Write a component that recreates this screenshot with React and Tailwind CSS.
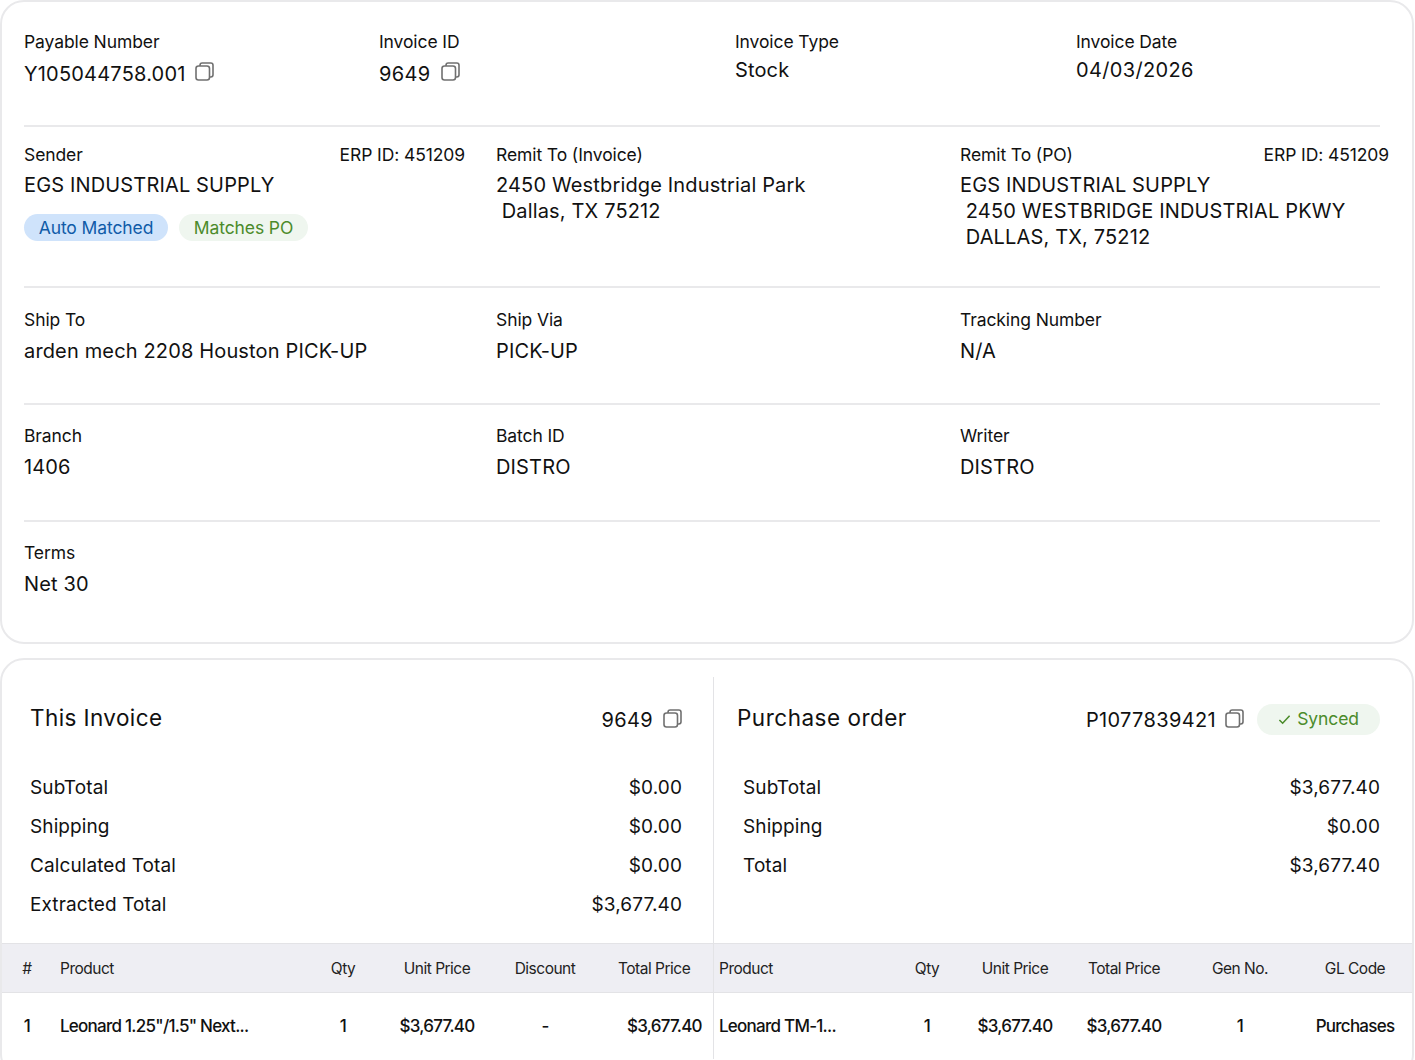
import React from 'react';

const CopyIcon = ({ className = '' }) => (
  <svg viewBox="0 0 19 19" fill="none" stroke="#707070" strokeWidth="1.6" className={`w-[19px] h-[19px] ${className}`}>
    <rect x="1" y="4" width="13.5" height="14" rx="2.5" />
    <path d="M5 4V3.2A2.2 2.2 0 0 1 7.2 1h8.6A2.2 2.2 0 0 1 18 3.2v9.6a2.2 2.2 0 0 1-2.2 2.2h-1.3" />
  </svg>
);

const Field = ({ label, value, className = '', gap = 'mt-[6px]' }) => (
  <div className={`shrink-0 ${className}`}>
    <div className="text-[17.5px] leading-[24px] tracking-[-0.1px]">{label}</div>
    <div className={`${gap} text-[20px] leading-[26px] tracking-[0.15px] whitespace-pre`}>{value}</div>
  </div>
);

const Row = ({ label, value }) => (
  <div className="flex justify-between h-[39px] items-center text-[19px] tracking-[0.1px]">
    <span>{label}</span>
    <span>{value}</span>
  </div>
);

const Pill = ({ className, children }) => (
  <span className={`inline-flex items-center justify-center rounded-full text-[17.5px] tracking-[-0.1px] ${className}`}>{children}</span>
);

const leftCols = 'grid-cols-[50px_261px_60px_128px_88px_124px]';
const rightCols = 'grid-cols-[183px_60px_116px_102px_130px_100px]';

export default function App() {
  return (
    <div className="w-[1414px] h-[1060px] overflow-hidden bg-white text-[#111] font-['Inter',sans-serif]">
      <section className="h-[644px] border-2 border-[#e9e9eb] rounded-[24px] pl-[22px] pr-[32px]">
        <div className="h-[125px] flex border-b-2 border-[#e9e9eb] pt-[28px]">
          <div className="w-[355px] shrink-0">
            <div className="text-[17.5px] leading-[24px] tracking-[-0.1px]">Payable Number</div>
            <div className="mt-[7px] flex items-center gap-[9px] text-[20px] leading-[26px] tracking-[0.2px]">Y105044758.001 <CopyIcon className="-mt-[5px]" /></div>
          </div>
          <div className="w-[356px] shrink-0">
            <div className="text-[17.5px] leading-[24px] tracking-[-0.1px]">Invoice ID</div>
            <div className="mt-[7px] flex items-center gap-[10px] text-[20px] leading-[26px] tracking-[0.35px]">9649 <CopyIcon className="-mt-[5px]" /></div>
          </div>
          <Field label="Invoice Type" value="Stock" className="w-[341px]" gap="mt-[3px]" />
          <div className="shrink-0">
            <div className="text-[17.5px] leading-[24px] tracking-[-0.1px]">Invoice Date</div>
            <div className="mt-[3px] text-[20px] leading-[26px] tracking-[0.35px]">04/03/2026</div>
          </div>
        </div>

        <div className="h-[161px] flex border-b-2 border-[#e9e9eb] pt-[16px]">
          <div className="w-[472px] shrink-0">
            <div className="w-[441px] flex justify-between text-[17.5px] leading-[24px] tracking-[-0.1px]"><span>Sender</span><span>ERP ID: 451209</span></div>
            <div className="mt-[5px] text-[20px] leading-[26px] tracking-[0.15px]">EGS INDUSTRIAL SUPPLY</div>
            <div className="mt-[16px] flex gap-[11px]">
              <Pill className="w-[144px] h-[27px] pt-[1px] bg-[#cfe3fb] text-[#0f5ba8]">Auto Matched</Pill>
              <Pill className="w-[129px] h-[27px] pt-[1px] bg-[#eff6ef] text-[#4b8b2b]">Matches PO</Pill>
            </div>
          </div>
          <div className="w-[464px] shrink-0">
            <div className="text-[17.5px] leading-[24px] tracking-[-0.1px]">Remit To (Invoice)</div>
            <div className="mt-[5px] text-[20px] leading-[26px] tracking-[0.15px] whitespace-pre">{'2450 Westbridge Industrial Park\n Dallas, TX 75212'}</div>
          </div>
          <div className="w-[429px] shrink-0">
            <div className="flex justify-between text-[17.5px] leading-[24px] tracking-[-0.1px]"><span>Remit To (PO)</span><span>ERP ID: 451209</span></div>
            <div className="mt-[5px] text-[20px] leading-[26px] tracking-[0.15px] whitespace-pre">{'EGS INDUSTRIAL SUPPLY\n 2450 WESTBRIDGE INDUSTRIAL PKWY\n DALLAS, TX, 75212'}</div>
          </div>
        </div>

        <div className="h-[117px] flex border-b-2 border-[#e9e9eb] pt-[20px]">
          <Field label="Ship To" value="arden mech 2208 Houston PICK-UP" className="w-[472px]" />
          <Field label="Ship Via" value="PICK-UP" className="w-[464px]" />
          <Field label="Tracking Number" value="N/A" />
        </div>

        <div className="h-[117px] flex border-b-2 border-[#e9e9eb] pt-[19px]">
          <Field label="Branch" value="1406" className="w-[472px]" />
          <Field label="Batch ID" value="DISTRO" className="w-[464px]" />
          <Field label="Writer" value="DISTRO" />
        </div>

        <div className="pt-[19px]">
          <Field label="Terms" value="Net 30" />
        </div>
      </section>

      <section className="mt-[14px] h-[420px] border-2 border-[#e9e9eb] rounded-[24px] overflow-hidden">
        <div className="flex h-[283px]">
          <div className="w-[711px] shrink-0 pt-[34px]">
            <div className="ml-[28px] mr-[31px]">
              <div className="h-[48px] flex items-center justify-between">
                <h2 className="text-[22.5px] tracking-[0.4px]">This Invoice</h2>
                <div className="mt-[3px] flex items-center gap-[10px] text-[20px] tracking-[0.35px]">9649 <CopyIcon className="-mt-[3px]" /></div>
              </div>
              <div className="mt-[27px]">
                <Row label="SubTotal" value="$0.00" />
                <Row label="Shipping" value="$0.00" />
                <Row label="Calculated Total" value="$0.00" />
                <Row label="Extracted Total" value="$3,677.40" />
              </div>
            </div>
          </div>
          <div className="flex-1 mt-[17px] border-l border-[#e3e3e6] pt-[17px]">
            <div className="ml-[23px] mr-[32px]">
              <div className="h-[48px] flex items-center justify-between">
                <h2 className="text-[22.5px] tracking-[0.5px]">Purchase order</h2>
                <div className="mt-[3px] flex items-center text-[20px] tracking-[0.35px]">
                  P1077839421
                  <CopyIcon className="ml-[9px] -mt-[3px]" />
                  <Pill className="ml-[13px] w-[123px] h-[31px] gap-[6px] bg-[#eff6ef] text-[#4b8b2b]">
                    <svg viewBox="0 0 14 14" fill="none" stroke="#4b8b2b" strokeWidth="1.7" className="w-[13px] h-[13px]"><path d="M1.5 7.5 5 11l7.5-8" /></svg>
                    Synced
                  </Pill>
                </div>
              </div>
              <div className="mt-[27px] ml-[6px]">
                <Row label="SubTotal" value="$3,677.40" />
                <Row label="Shipping" value="$0.00" />
                <Row label="Total" value="$3,677.40" />
              </div>
            </div>
          </div>
        </div>

        <div className="flex">
          <div className="w-[711px] shrink-0">
            <div className={`grid ${leftCols} h-[50px] pt-[2px] items-center bg-[#eeeef3] border-y border-[#e3e3e6] text-[15.5px] tracking-[-0.5px] text-center text-[#222]`}>
              <span>#</span>
              <span className="text-left pl-[8px]">Product</span>
              <span>Qty</span>
              <span>Unit Price</span>
              <span>Discount</span>
              <span className="text-left pl-[29px]">Total Price</span>
            </div>
            <div className={`grid ${leftCols} h-[66px] pt-[2px] items-center text-[17px] font-medium tracking-[-0.75px] text-center`}>
              <span>1</span>
              <span className="text-left pl-[8px]">Leonard 1.25"/1.5" Next...</span>
              <span>1</span>
              <span>$3,677.40</span>
              <span>-</span>
              <span className="text-left pl-[38px] whitespace-nowrap">$3,677.40</span>
            </div>
          </div>
          <div className="flex-1 border-l border-[#e3e3e6]">
            <div className={`grid ${rightCols} h-[50px] pt-[2px] items-center bg-[#eeeef3] border-y border-[#e3e3e6] text-[15.5px] tracking-[-0.5px] text-center text-[#222]`}>
              <span className="text-left pl-[5px]">Product</span>
              <span>Qty</span>
              <span>Unit Price</span>
              <span>Total Price</span>
              <span>Gen No.</span>
              <span>GL Code</span>
            </div>
            <div className={`grid ${rightCols} h-[66px] pt-[2px] items-center text-[17px] font-medium tracking-[-0.75px] text-center`}>
              <span className="text-left pl-[5px]">Leonard TM-1...</span>
              <span>1</span>
              <span>$3,677.40</span>
              <span>$3,677.40</span>
              <span>1</span>
              <span>Purchases</span>
            </div>
          </div>
        </div>
      </section>
    </div>
  );
}
